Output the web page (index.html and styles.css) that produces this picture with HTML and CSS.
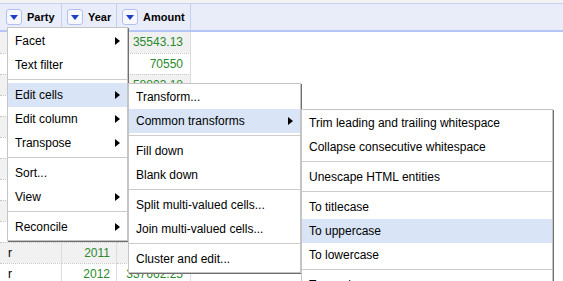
FILE: index.html
```html
<!DOCTYPE html>
<html lang="en">
<head>
  <meta charset="UTF-8" />
  <title>Column menu</title>
  <link rel="stylesheet" href="styles.css">
</head>
<body>

<div class="sheet">
  <div class="sheet-top"></div>
  <div class="sheet-head">
    <div class="hcell col-party"><span class="drop"></span>Party</div>
    <div class="hcell col-year"><span class="drop"></span>Year</div>
    <div class="hcell col-amount"><span class="drop"></span>Amount</div>
    <div class="hcell col-rest"></div>
  </div>
  <div class="sheet-body" id="rows"></div>
</div>

<!-- column menu -->
<div class="menu menu-column">
  <div class="item">Facet<span class="arrow"></span></div>
  <div class="item">Text filter</div>
  <div class="sep"></div>
  <div class="item active">Edit cells<span class="arrow"></span></div>
  <div class="item">Edit column<span class="arrow"></span></div>
  <div class="item">Transpose<span class="arrow"></span></div>
  <div class="sep"></div>
  <div class="item">Sort...</div>
  <div class="item">View<span class="arrow"></span></div>
  <div class="sep"></div>
  <div class="item">Reconcile<span class="arrow"></span></div>
</div>

<!-- edit cells submenu -->
<div class="menu menu-cells">
  <div class="item">Transform...</div>
  <div class="item active">Common transforms<span class="arrow"></span></div>
  <div class="sep"></div>
  <div class="item">Fill down</div>
  <div class="item">Blank down</div>
  <div class="sep"></div>
  <div class="item">Split multi-valued cells...</div>
  <div class="item">Join multi-valued cells...</div>
  <div class="sep"></div>
  <div class="item">Cluster and edit...</div>
</div>

<!-- common transforms submenu -->
<div class="menu menu-transforms">
  <div class="item">Trim leading and trailing whitespace</div>
  <div class="item">Collapse consecutive whitespace</div>
  <div class="sep"></div>
  <div class="item">Unescape HTML entities</div>
  <div class="sep"></div>
  <div class="item">To titlecase</div>
  <div class="item active">To uppercase</div>
  <div class="item">To lowercase</div>
  <div class="sep"></div>
  <div class="item">To number</div>
  <div class="item">To date</div>
</div>

<script>
  const rows = [
    ['r', '2000', '35543.13'],
    ['r', '2001', '70550'],
    ['r', '2002', '58803.18'],
    ['d', '2003', '12040.5'],
    ['d', '2004', '8830'],
    ['r', '2005', '44120.75'],
    ['d', '2006', '21900'],
    ['r', '2007', '130455.9'],
    ['d', '2008', '9910.4'],
    ['r', '2010', '88020.33'],
    ['r', '2011', '214930.6'],
    ['r', '2012', '337662.25']
  ];
  const body = document.getElementById('rows');
  rows.forEach(r => {
    const row = document.createElement('div');
    row.className = 'row';
    row.innerHTML = `
      <div class="cell col-party">${r[0]}</div>
      <div class="cell col-year num">${r[1]}</div>
      <div class="cell col-amount num">${r[2]}</div>
    `;
    body.appendChild(row);
  });
</script>

</body>
</html>
```

FILE: styles.css
```css
body {
  margin: 0;
  font-family: 'Liberation Sans', Arial, sans-serif;
  font-size: 12px;
  color: #000;
  background: #fff;
}
.sheet-top {
  height: 3px;
  background: #f3f3f3;
}
.sheet-head {
  display: flex;
  height: 26px;
  background: #e9ecf9;
  border-top: 1px solid #c9d2ef;
  border-bottom: 2px solid #b4c6f5;
}
.hcell {
  display: flex;
  align-items: center;
  gap: 5px;
  box-sizing: border-box;
  padding-left: 5px;
  border-right: 1px solid #c5d0f0;
  font-size: 11px;
  font-weight: bold;
}
.hcell.col-party { padding-left: 6px; }
.hcell.col-rest {
  flex: 1;
  border-right: none;
}
.col-party { width: 62px; }
.col-year { width: 55px; }
.col-amount { width: 74px; }
.drop {
  display: flex;
  align-items: center;
  justify-content: center;
  width: 16px;
  height: 16px;
  box-sizing: border-box;
  background: #f7f8fe;
  border: 1px solid #b3c0ee;
  border-radius: 3px;
}
.drop::after {
  content: "";
  border-top: 5px solid #1b3ec4;
  border-left: 4px solid transparent;
  border-right: 4px solid transparent;
  margin-top: 1px;
}
.row {
  display: flex;
  height: 21px;
}
.row + .row .cell {
  border-top: 1px dotted #c8c8c8;
}
.row:nth-child(odd) .cell {
  background: #f1f1f1;
}
.cell {
  box-sizing: border-box;
  height: 21px;
  line-height: 20px;
  padding: 0 6px 0 8px;
  border-right: 1px solid #dcdcdc;
  white-space: nowrap;
  overflow: hidden;
}
.cell.num {
  text-align: right;
  color: #2a8a2a;
}
.cell.col-amount { padding-right: 7px; }

.menu {
  position: absolute;
  box-sizing: border-box;
  background: #fff;
  padding: 1px 0;
  border: 1px solid #c4c4c4;
  box-shadow: 1px 1px 0 #6f6f6f;
  overflow: hidden;
}
.menu-column {
  left: 7px;
  top: 27px;
  width: 121px;
}
.menu-cells {
  left: 128px;
  top: 83px;
  width: 173px;
}
.menu-transforms {
  left: 301px;
  top: 109px;
  width: 252px;
  height: 200px;
}
.item {
  display: flex;
  align-items: center;
  justify-content: space-between;
  height: 24px;
  padding: 0 7px;
  white-space: nowrap;
}
.item.active {
  background: #d9e5f6;
}
.arrow {
  border-left: 5px solid #000;
  border-top: 4px solid transparent;
  border-bottom: 4px solid transparent;
}
.sep {
  height: 1px;
  margin: 2px 0 3px;
  background: #cccccc;
}
```
